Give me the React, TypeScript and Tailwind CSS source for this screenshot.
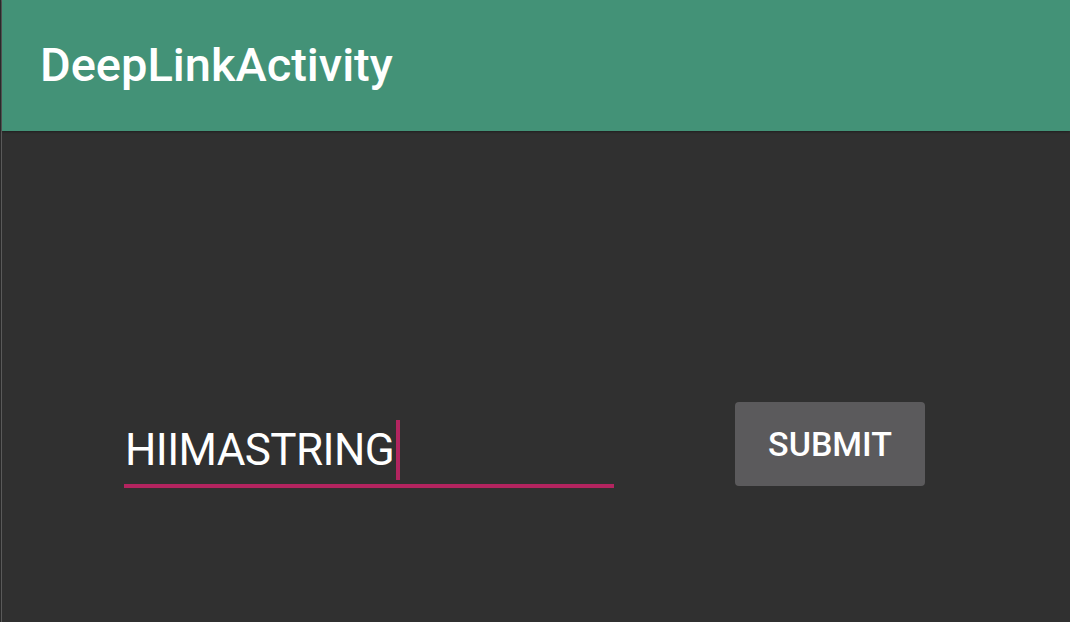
const App = () => {
  return (
    <div className="flex h-[622px] w-[1070px] bg-[#303030] font-['Roboto','Liberation_Sans',sans-serif]">
      <div className="w-px bg-[#2a2a2a]" />
      <div className="w-px bg-[#5a5a5a]" />
      <div className="flex flex-1 flex-col">
        <header className="flex h-[131px] items-center bg-[#439277] pl-[38px] shadow-[0_1px_2px_rgba(0,0,0,0.35)]">
          <h1 className="pb-[2px] text-[47px] font-medium leading-none text-white">DeepLinkActivity</h1>
        </header>
        <main className="flex flex-1 items-start pt-[287px]">
          <div className="ml-[122px] flex w-[490px] flex-col">
            <div className="flex h-[64px] items-center pl-px">
              <span className="text-[44px] leading-none tracking-[-0.6px] text-white">HIIMASTRING</span>
              <span className="ml-[2px] h-[60px] w-[4px] bg-[#b3245f]" />
            </div>
            <div className="mt-[2px] h-[4px] bg-[#b3245f]" />
          </div>
          <button className="ml-[121px] mt-[-16px] flex h-[84px] w-[190px] items-center justify-center rounded-[4px] bg-[#5b5a5c] text-[34px] font-medium leading-none text-white">
            SUBMIT
          </button>
        </main>
      </div>
    </div>
  );
};

export default App;
